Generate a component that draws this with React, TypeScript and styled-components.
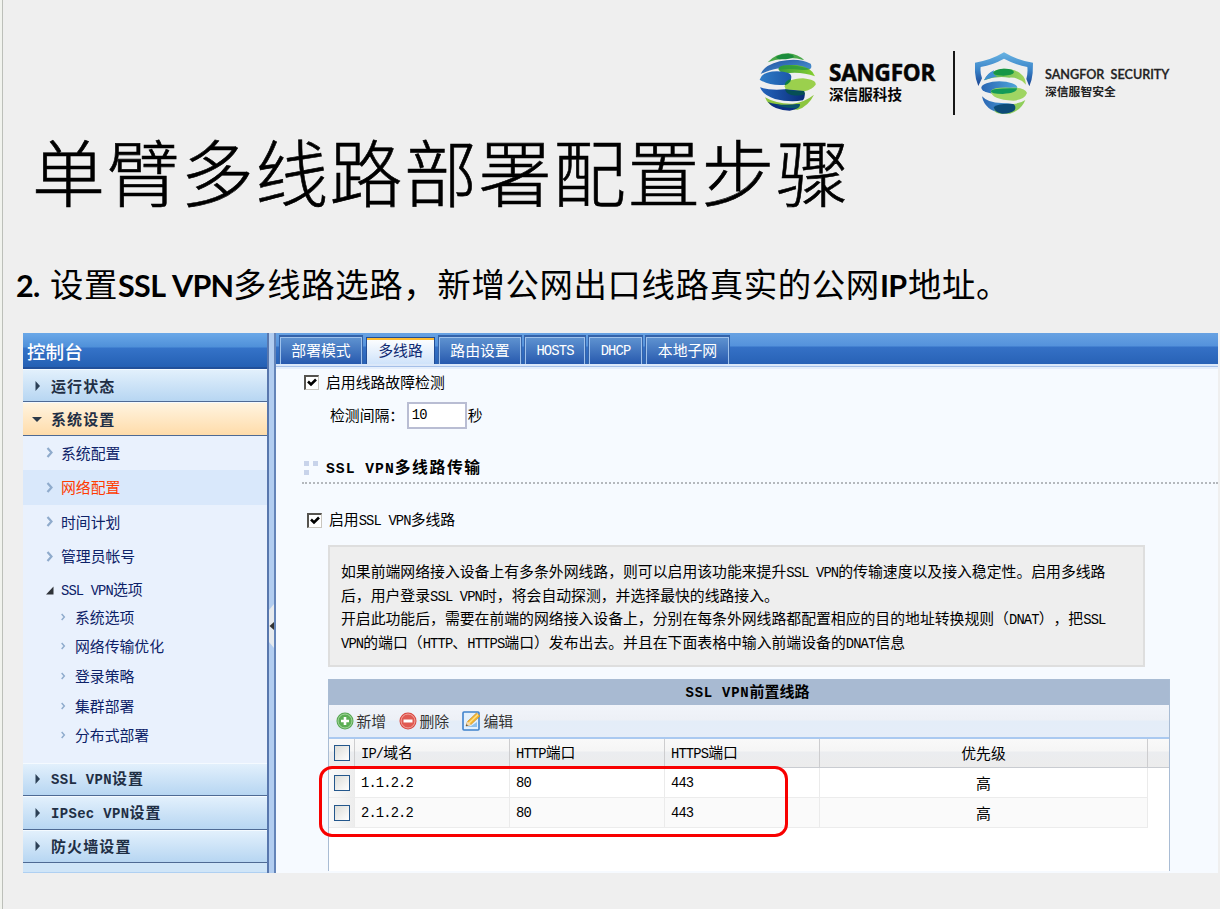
import React from 'react';
import styled, { createGlobalStyle } from 'styled-components';

const GlobalStyle = createGlobalStyle`
  * { box-sizing: border-box; }
  body {
    margin: 0;
    background: #efefef;
    font-family: 'Noto Sans CJK SC', sans-serif;
    text-spacing-trim: space-all;
    color: #000;
  }
`;

const Slide = styled.main`
  width: 1220px;
  height: 909px;
  overflow: hidden;
  background: #efefef;
  border-left: 2px solid #f1f3ee;
  box-shadow: inset 1px 0 0 #bcbfb9;
  padding: 0 2px 0 21px;
`;

/* ---------- Brand header ---------- */

const BrandBar = styled.header`
  display: flex;
  height: 128px;
  padding: 51px 0 0 735px;
  align-items: flex-start;
`;

const BrandDivider = styled.div`
  width: 2px;
  height: 64px;
  background: #161616;
  margin: 0 19px 0 20px;
  flex: none;
`;

const BrandText = styled.div<{ $width: number; $left: number; $top: number }>`
  width: ${(p) => p.$width}px;
  margin-left: ${(p) => p.$left}px;
  padding-top: ${(p) => p.$top}px;
  flex: none;
`;

const BrandName = styled.div<{ $small?: boolean }>`
  font-weight: ${(p) => (p.$small ? 600 : 700)};
  font-family: ${(p) => (p.$small ? "'Lato'" : "'Open Sans'")}, sans-serif;
  font-size: ${(p) => (p.$small ? 12.6 : 22.5)}px;
  line-height: ${(p) => (p.$small ? 14 : 24)}px;
  letter-spacing: ${(p) => (p.$small ? 0 : -0.2)}px;
  white-space: pre;
  color: ${(p) => (p.$small ? '#222' : '#050505')};
  -webkit-text-stroke: ${(p) => (p.$small ? '0.3px #222' : '0.5px #050505')};
`;

const BrandCn = styled.div<{ $small?: boolean }>`
  font-weight: 700;
  font-size: ${(p) => (p.$small ? 11.8 : 14.6)}px;
  line-height: 17px;
  white-space: nowrap;
  color: ${(p) => (p.$small ? '#222' : '#050505')};
`;

const Globe = () => (
  <svg width="60" height="62" viewBox="55 36 180 186">
    <defs>
      <linearGradient id="gb" x1="0" y1="0" x2="1" y2="1">
        <stop offset="0" stopColor="#1f4f9f" />
        <stop offset="1" stopColor="#4f9cd8" />
      </linearGradient>
      <linearGradient id="gm" x1="0" y1="0" x2="1" y2="0">
        <stop offset="0" stopColor="#2f7cc6" />
        <stop offset="1" stopColor="#1b57a8" />
      </linearGradient>
      <linearGradient id="gl" x1="0" y1="0" x2="1" y2="0">
        <stop offset="0" stopColor="#2465bd" />
        <stop offset="1" stopColor="#0a2c78" />
      </linearGradient>
      <linearGradient id="gg" x1="0" y1="0" x2="1" y2="0">
        <stop offset="0" stopColor="#3f9f3a" />
        <stop offset="1" stopColor="#86cf30" />
      </linearGradient>
    </defs>
    <path d="M84 70Q108 43 146 43Q176 46 194 64Q160 54 132 59Q106 61 84 70Z" fill="#4aa84a" />
    <path d="M110 53Q124 44 146 44Q165 48 162 55Q150 61 128 61Q108 60 110 53Z" fill="#1b8b3c" />
    <path d="M63 105Q72 80 120 67Q176 55 213 74Q220 90 204 92Q150 82 118 88Q84 95 63 105Z" fill="url(#gb)" />
    <path d="M117 88Q120 76 170 78Q216 84 226 112Q190 99 150 102Q114 104 117 88Z" fill="url(#gg)" />
    <path d="M117 88Q120 78 150 79Q190 82 210 90Q204 94 180 92Q150 88 117 92Z" fill="#2c9a3d" opacity=".8" />
    <path d="M60 122Q66 98 112 97Q154 98 155 113Q155 131 138 137Q92 142 60 122Z" fill="url(#gm)" />
    <path d="M135 142Q140 120 190 118Q230 122 228 137Q218 151 194 157Q136 166 135 142Z" fill="#9bd04d" />
    <path d="M135 137Q139 123 154 121Q152 133 136 139Z" fill="#0f7d43" />
    <path d="M61 145Q90 155 136 151L193 156Q199 172 190 184Q150 191 106 180Q69 168 61 145Z" fill="url(#gl)" />
    <path d="M136 151Q160 158 193 156L196 166Q180 172 155 168Q138 163 136 151Z" fill="#064f55" />
    <path d="M76 175Q112 196 160 194Q197 188 223 167Q206 202 174 212Q120 211 92 198Q80 188 76 175Z" fill="#8dc63f" />
    <path d="M84 189Q120 202 180 195Q184 209 150 215Q106 215 84 189Z" fill="#0d2f83" />
    <path d="M104 196Q140 202 180 195Q182 203 172 208Q130 208 104 196Z" fill="#0a5668" />
  </svg>
);

const Shield = () => (
  <svg width="60" height="64" viewBox="42 34 180 192">
    <defs>
      <linearGradient id="sb" x1="0" y1="0" x2="0" y2="1">
        <stop offset="0" stopColor="#68b3e2" />
        <stop offset=".5" stopColor="#3c86ca" />
        <stop offset="1" stopColor="#17408f" />
      </linearGradient>
      <linearGradient id="sm" x1="0" y1="0" x2="1" y2="0">
        <stop offset="0" stopColor="#2b67b4" />
        <stop offset="1" stopColor="#4fa5da" />
      </linearGradient>
      <linearGradient id="sg" x1="0" y1="0" x2="1" y2="0">
        <stop offset="0" stopColor="#4caf50" />
        <stop offset="1" stopColor="#a4d65e" />
      </linearGradient>
    </defs>
    <path d="M45 69Q92 62 132 38Q172 62 219 69L218 100Q216 122 208 140L199 118Q204 100 202 82Q168 76 132 57Q98 76 62 82Q60 100 66 116L55 139Q46 118 45 98Z" fill="url(#sb)" />
    <path d="M72 122Q86 92 130 87Q166 86 186 106Q196 114 198 135Q176 112 148 114Q108 108 72 122Z" fill="url(#sg)" />
    <path d="M72 122Q82 100 102 92Q96 106 112 110Q92 114 72 122Z" fill="#3f8fd0" />
    <path d="M100 98Q112 86 134 87Q162 88 162 98Q158 108 130 108Q98 108 100 98Z" fill="#169646" />
    <ellipse cx="118" cy="144" rx="54" ry="19" fill="url(#sm)" />
    <path d="M92 154Q100 142 150 144Q196 142 201 160Q194 180 160 183Q94 180 92 154Z" fill="#9fd563" />
    <path d="M92 154Q100 144 171 146Q172 160 128 163Q92 163 92 154Z" fill="#129a58" />
    <path d="M66 170Q84 190 124 190Q160 190 168 198Q168 212 148 218L124 221Q74 212 66 170Z" fill="url(#sm)" />
    <path d="M104 206Q130 194 160 193Q184 190 196 181Q184 212 150 222L122 222Q100 220 104 206Z" fill="#8fce5a" />
    <path d="M101 202Q120 190 160 193Q170 200 164 212Q150 223 126 222Q104 219 101 202Z" fill="#0c4b78" />
  </svg>
);

/* ---------- Headings ---------- */

const Title = styled.h1`
  margin: -6px 0 0 9px;
  font-weight: 300;
  font-size: 73px;
  letter-spacing: 1.4px;
  line-height: 94px;
  height: 94px;
  white-space: nowrap;
  -webkit-text-stroke: 0.6px #000;
`;

const Step = styled.h2`
  margin: 43px 0 0 -7px;
  height: 74px;
  font-weight: 400;
  font-size: 33.4px;
  letter-spacing: 0.65px;
  line-height: 48px;
  white-space: nowrap;
  display: flex;
  align-items: baseline;
`;

const StepLatin = styled.b<{ $width: number }>`
  font-family: 'Lato', sans-serif;
  font-weight: 700;
  font-size: 30.5px;
  letter-spacing: -0.7px;
  word-spacing: 2px;
  width: ${(p) => p.$width}px;
  flex: none;
`;

/* ---------- Text with half-width Latin runs ---------- */

const LatinRun = styled.span`
  font-family: 'Liberation Mono', monospace;
  font-size: 0.93em;
  letter-spacing: var(--latin-gap, -0.062em);
  white-space: pre;
`;

const Mixed = ({ text }: { text: string }) => (
  <span>
    {text.split(/([\x20-\x7e]+)/).map((part, i) =>
      i % 2 ? <LatinRun key={i}>{part}</LatinRun> : part
    )}
  </span>
);

/* ---------- Console frame ---------- */

const Console = styled.section`
  width: 1195px;
  height: 540px;
  display: flex;
  overflow: hidden;
  background: #f6faff;
  font-size: 14.85px;
  line-height: 20px;
`;

const Sidebar = styled.nav`
  width: 244px;
  flex: none;
  background: #e9f1fd;
`;

const SidebarTitle = styled.div`
  height: 36px;
  padding: 2px 0 0 4px;
  line-height: 32px;
  font-size: 18.6px;
  font-weight: 500;
  color: #fff;
  background: linear-gradient(#6aa8e8 0, #4f90d9 14px, #3573c8 15px, #2460b4 100%);
  border-bottom: 2px solid #21509a;
`;

const Category = styled.div<{ $open?: boolean }>`
  --latin-gap: 0.35px;
  height: 33.4px;
  display: flex;
  align-items: center;
  gap: 9px;
  padding-left: 9px;
  font-size: 15px;
  letter-spacing: 1.1px;
  font-weight: 700;
  color: #1f2f45;
  border-top: 1px solid #f4faff;
  border-bottom: 1px solid #4e6a94;
  background: ${(p) =>
    p.$open ? 'linear-gradient(#fff4e0, #ffdcaa)' : 'linear-gradient(#e2f0fc, #b7d6f2)'};
  svg { flex: none; width: 10px; height: 12px; }
`;

const MenuItem = styled.div<{ $active?: boolean }>`
  height: 34.6px;
  display: flex;
  align-items: center;
  gap: 7px;
  padding: 0 0 1px 22px;
  color: ${(p) => (p.$active ? '#ff3c00' : '#0d2268')};
  background: ${(p) => (p.$active ? '#d9e8fb' : 'transparent')};
  svg { flex: none; }
`;

const SubList = styled.div`
  height: 161px;
  margin-top: -7px;
`;

const SubItem = styled.div`
  height: 29.7px;
  display: flex;
  align-items: center;
  gap: 9px;
  padding-left: 37px;
  color: #0d2268;
  svg { flex: none; }
`;

const SidebarTail = styled.div`
  height: 11px;
  background: #cfe5f8;
  border-bottom: 2px solid #afd0f2;
`;

const Splitter = styled.div`
  width: 9px;
  flex: none;
  display: flex;
  align-items: center;
  background: #b2cdf0;
  border-left: 2px solid #5877ad;
  border-right: 2px solid #6484b8;
  padding-top: 46px;
`;

const ArrowRight = () => (
  <svg viewBox="0 0 10 12"><path d="M3.5 1L8 6L3.5 11Z" fill="#2c4056" /></svg>
);
const ArrowDown = () => (
  <svg viewBox="0 0 10 12"><path d="M0 4H10L5 9Z" fill="#2c3a4a" /></svg>
);
const Chevron = ({ small }: { small?: boolean }) => (
  <svg width={small ? 6 : 9} height={small ? 8 : 11} viewBox="0 0 9 11">
    <path d="M2.5 1L6.5 5.5L2.5 10" fill="none" stroke="#8fabcc" strokeWidth="2.2" />
  </svg>
);
const Corner = () => (
  <svg width="9" height="9" viewBox="0 0 9 9"><path d="M8.5 0.5V8.5H1Z" fill="#2f3338" /></svg>
);

/* ---------- Main panel ---------- */

const Panel = styled.div`
  flex: 1;
  min-width: 0;
  display: flex;
  flex-direction: column;
`;

const TabBar = styled.div`
  height: 36px;
  flex: none;
  display: flex;
  align-items: flex-start;
  gap: 4px;
  padding: 4px 0 0 4px;
  background: linear-gradient(#68a2e2 0, #5492dc 13px, #3571c6 14px, #2862b6 31px, #dbe8f9 31px, #dbe8f9 33px, #a4bfe8 33px, #a4bfe8 34px, #e5effc 34px);
`;

const Tab = styled.div<{ $width: number; $active?: boolean }>`
  width: ${(p) => p.$width}px;
  height: 27px;
  padding-bottom: 2px;
  flex: none;
  display: flex;
  align-items: center;
  justify-content: center;
  white-space: nowrap;
  color: ${(p) => (p.$active ? '#0f2a72' : '#fff')};
  background: ${(p) =>
    p.$active ? 'linear-gradient(#fff, #cfe3fa)' : 'linear-gradient(#5e92d0, #2759ae)'};
  border: 1px solid ${(p) => (p.$active ? '#224d96' : '#9fc2ec')};
  border-bottom: 0;
  box-shadow: ${(p) => (p.$active ? 'inset 0 2px 0 #fdbb30' : '0 -1px 0 1px #3463aa')};
`;

const Content = styled.div`
  flex: 1;
  padding: 3px 0 0 28px;
`;

const CheckRow = styled.label<{ $left: number }>`
  display: flex;
  align-items: center;
  height: 20px;
  gap: 7px;
  padding-left: ${(p) => p.$left}px;
`;

const Tick = styled.span`
  width: 15px;
  height: 15px;
  flex: none;
  display: flex;
  background: #fff;
  border: 2px solid #55534f;
  border-right: 1px solid #c9c6bf;
  border-bottom: 1px solid #c9c6bf;
`;

const TickMark = () => (
  <Tick>
    <svg width="12" height="12" viewBox="0 0 12 12">
      <path d="M2 4.5L5 7.5L10 2.5" fill="none" stroke="#000" strokeWidth="2.6" />
    </svg>
  </Tick>
);

const IntervalRow = styled.div`
  display: flex;
  align-items: center;
  height: 27px;
  margin-top: 10px;
  padding-left: 26px;
`;

const IntervalLabel = styled.span`
  padding-bottom: 1px;
`;

const IntervalInput = styled.div`
  width: 60px;
  height: 27px;
  margin: 0 1px 0 2.5px;
  padding: 0 3px;
  line-height: 17px;
  background: #fff;
  border: 2px solid #b9bdd3;
`;

const Section = styled.div`
  --latin-gap: 1px;
  display: flex;
  align-items: center;
  height: 30px;
  margin: 25px 0 26px -2px;
  padding: 0 0 1px 2px;
  gap: 8px;
  font-size: 15.8px;
  letter-spacing: 1.6px;
  font-weight: 700;
  border-bottom: 2px dotted #b4b8bd;
`;

const Bullets = () => (
  <svg width="14" height="14" viewBox="0 0 14 14">
    <path d="M0 0H5V5H0ZM9 0H14V5H9ZM0 9H5V14H0Z" fill="#c8d3ea" />
  </svg>
);

const Info = styled.div`
  width: 817px;
  height: 122px;
  margin: 15px 0 0 24px;
  padding: 12px 0 0 11px;
  line-height: 23.6px;
  background: #eee;
  border: 2px solid #dedede;
`;

const InfoLine = styled.div`
  white-space: nowrap;
  height: 23.6px;
`;

/* ---------- Grid ---------- */

const Grid = styled.div`
  position: relative;
  width: 842px;
  height: 192px;
  margin: 12px 0 0 24px;
  background: #fff;
  border: 1px solid #a9bcd4;
  border-bottom: 0;
`;

const GridTitle = styled.div`
  --latin-gap: 0.75px;
  height: 25px;
  line-height: 22px;
  padding-right: 3px;
  text-align: center;
  font-size: 15px;
  font-weight: 700;
  background: #a8bad2;
`;

const Toolbar = styled.div`
  height: 34px;
  display: flex;
  align-items: center;
  padding-left: 7px;
  color: #333;
  background: linear-gradient(#f1f4fa 0, #edf0f6 15px, #e4edf8 16px, #e5edf8 100%);
  border-bottom: 2px solid #aac9f0;
`;

const Action = styled.div`
  display: flex;
  align-items: center;
  gap: 2.5px;
  width: 63px;
  white-space: nowrap;
  svg { flex: none; }
`;

const Row = styled.div<{ $kind?: 'head' | 'odd' | 'even' }>`
  display: grid;
  grid-template-columns: 26px 155px 155px 155px 328px 1fr;
  height: ${(p) => (p.$kind === 'head' ? 29 : 30)}px;
  width: ${(p) => (p.$kind === 'head' ? '100%' : '819px')};
  background: ${(p) =>
    p.$kind === 'head'
      ? 'linear-gradient(#f9f9f9 0, #f5f5f5 12px, #ebedf0 13px, #ececec 100%)'
      : p.$kind === 'even'
        ? '#fafafa'
        : '#fff'};
  border-bottom: 1px solid ${(p) => (p.$kind === 'head' ? '#c9ccd1' : '#ececec')};
`;

const Cell = styled.div<{ $center?: boolean; $head?: boolean }>`
  display: flex;
  align-items: center;
  justify-content: ${(p) => (p.$center ? 'center' : 'flex-start')};
  padding-left: ${(p) => (p.$center ? 0 : 6)}px;
  white-space: nowrap;
  border-right: 1px solid ${(p) => (p.$head ? '#cdcdcf' : '#ebebeb')};
`;

const BoxCell = styled(Cell)`
  padding-left: 5px;
  background: ${(p) => (p.$head ? 'none' : 'linear-gradient(90deg, #fafafa, #ededed)')};
`;

const EmptyBox = styled.span`
  width: 16px;
  height: 16px;
  border: 1.5px solid #24578c;
  background: linear-gradient(135deg, #dcdcd7, #fff);
`;

const Highlight = styled.div`
  position: absolute;
  left: -10px;
  top: 86px;
  width: 469px;
  height: 71px;
  border: 3px solid #f80000;
  border-radius: 13px;
`;

const AddIcon = () => (
  <svg width="18" height="18" viewBox="0 0 18 18">
    <circle cx="9" cy="9" r="8.5" fill="#55a650" />
    <circle cx="9" cy="9" r="7" fill="#5cae55" stroke="#a9d8a2" />
    <path d="M9 5V13M5 9H13" stroke="#fff" strokeWidth="2.6" />
  </svg>
);
const RemoveIcon = () => (
  <svg width="18" height="18" viewBox="0 0 18 18">
    <circle cx="9" cy="9" r="8.5" fill="#d9463f" />
    <circle cx="9" cy="9" r="7" fill="#e05a52" stroke="#f3a9a2" />
    <path d="M4.5 9H13.5" stroke="#fff" strokeWidth="3" />
  </svg>
);
const EditIcon = () => (
  <svg width="19" height="20" viewBox="0 0 19 20">
    <rect x="1" y="1" width="16" height="18" rx="1" fill="#e3f0fc" stroke="#3f82cc" strokeWidth="1.6" />
    <path d="M3 16H15V11L9 15Z" fill="#8cc0ee" />
    <path d="M4 15L5.5 10.5L14.5 2L18 5L9 13.5Z" fill="#f2b632" stroke="#c48a2a" strokeWidth=".7" />
    <path d="M7 12L16 3.5" stroke="#ffe28a" strokeWidth="1.4" />
    <path d="M4 15L5.5 10.5L9 13.5Z" fill="#f6ddb4" />
    <path d="M4 15L4.6 13.2L6 14.4Z" fill="#333" />
  </svg>
);
const Handle = () => (
  <svg width="5" height="44" viewBox="0 0 5 44">
    <path d="M5 0V44L0 38V6Z" fill="#e6eaee" />
    <path d="M5 18V26L0.5 22Z" fill="#333" />
  </svg>
);

const tabs = [
  { label: '部署模式', width: 82 },
  { label: '多线路', width: 69, active: true },
  { label: '路由设置', width: 82 },
  { label: 'HOSTS', width: 60 },
  { label: 'DHCP', width: 53 },
  { label: '本地子网', width: 83 },
];

const subItems = ['系统选项', '网络传输优化', '登录策略', '集群部署', '分布式部署'];

const infoLines = [
  '如果前端网络接入设备上有多条外网线路，则可以启用该功能来提升SSL VPN的传输速度以及接入稳定性。启用多线路',
  '后，用户登录SSL VPN时，将会自动探测，并选择最快的线路接入。',
  '开启此功能后，需要在前端的网络接入设备上，分别在每条外网线路都配置相应的目的地址转换规则（DNAT），把SSL',
  'VPN的端口（HTTP、HTTPS端口）发布出去。并且在下面表格中输入前端设备的DNAT信息',
];

const rows = [
  { ip: '1.1.2.2', http: '80', https: '443', level: '高' },
  { ip: '2.1.2.2', http: '80', https: '443', level: '高' },
];

export default function App() {
  return (
    <Slide>
      <GlobalStyle />
      <BrandBar>
        <Globe />
        <BrandText $width={104} $left={11} $top={10}>
          <BrandName>SANGFOR</BrandName>
          <BrandCn>深信服科技</BrandCn>
        </BrandText>
        <BrandDivider />
        <Shield />
        <BrandText $width={127} $left={11} $top={17}>
          <BrandName $small>{'SANGFOR  SECURITY'}</BrandName>
          <BrandCn $small>深信服智安全</BrandCn>
        </BrandText>
      </BrandBar>
      <Title>单臂多线路部署配置步骤</Title>
      <Step>
        <StepLatin $width={34}>2.</StepLatin>
        设置
        <StepLatin $width={115}>SSL VPN</StepLatin>
        多线路选路，新增公网出口线路真实的公网
        <StepLatin $width={28}>IP</StepLatin>
        地址。
      </Step>
      <Console>
        <Sidebar>
          <SidebarTitle>控制台</SidebarTitle>
          <Category><ArrowRight />运行状态</Category>
          <Category $open><ArrowDown />系统设置</Category>
          <MenuItem><Chevron />系统配置</MenuItem>
          <MenuItem $active><Chevron />网络配置</MenuItem>
          <MenuItem><Chevron />时间计划</MenuItem>
          <MenuItem><Chevron />管理员帐号</MenuItem>
          <MenuItem><Corner /><Mixed text="SSL VPN选项" /></MenuItem>
          <SubList>
            {subItems.map((s) => (
              <SubItem key={s}><Chevron small />{s}</SubItem>
            ))}
          </SubList>
          <Category><ArrowRight /><Mixed text="SSL VPN设置" /></Category>
          <Category><ArrowRight /><Mixed text="IPSec VPN设置" /></Category>
          <Category><ArrowRight />防火墙设置</Category>
          <SidebarTail />
        </Sidebar>
        <Splitter><Handle /></Splitter>
        <Panel>
          <TabBar>
            {tabs.map((t) => (
              <Tab key={t.label} $width={t.width} $active={t.active}>
                <Mixed text={t.label} />
              </Tab>
            ))}
          </TabBar>
          <Content>
            <CheckRow $left={0}><TickMark />启用线路故障检测</CheckRow>
            <IntervalRow>
              <IntervalLabel>检测间隔：</IntervalLabel>
              <IntervalInput><Mixed text="10" /></IntervalInput>
              <IntervalLabel>秒</IntervalLabel>
            </IntervalRow>
            <Section>
              <Bullets />
              <Mixed text="SSL VPN多线路传输" />
            </Section>
            <CheckRow $left={3}>
              <TickMark />
              <Mixed text="启用SSL VPN多线路" />
            </CheckRow>
            <Info>
              {infoLines.map((l) => (
                <InfoLine key={l}><Mixed text={l} /></InfoLine>
              ))}
            </Info>
            <Grid>
              <GridTitle><Mixed text="SSL VPN前置线路" /></GridTitle>
              <Toolbar>
                <Action><AddIcon />新增</Action>
                <Action><RemoveIcon />删除</Action>
                <Action><EditIcon />编辑</Action>
              </Toolbar>
              <Row $kind="head">
                <BoxCell $head><EmptyBox /></BoxCell>
                <Cell $head><Mixed text="IP/域名" /></Cell>
                <Cell $head><Mixed text="HTTP端口" /></Cell>
                <Cell $head><Mixed text="HTTPS端口" /></Cell>
                <Cell $head $center>优先级</Cell>
              </Row>
              {rows.map((r, i) => (
                <Row key={r.ip} $kind={i % 2 ? 'even' : 'odd'}>
                  <BoxCell><EmptyBox /></BoxCell>
                  <Cell><Mixed text={r.ip} /></Cell>
                  <Cell><Mixed text={r.http} /></Cell>
                  <Cell><Mixed text={r.https} /></Cell>
                  <Cell $center>{r.level}</Cell>
                </Row>
              ))}
              <Highlight />
            </Grid>
          </Content>
        </Panel>
      </Console>
    </Slide>
  );
}
